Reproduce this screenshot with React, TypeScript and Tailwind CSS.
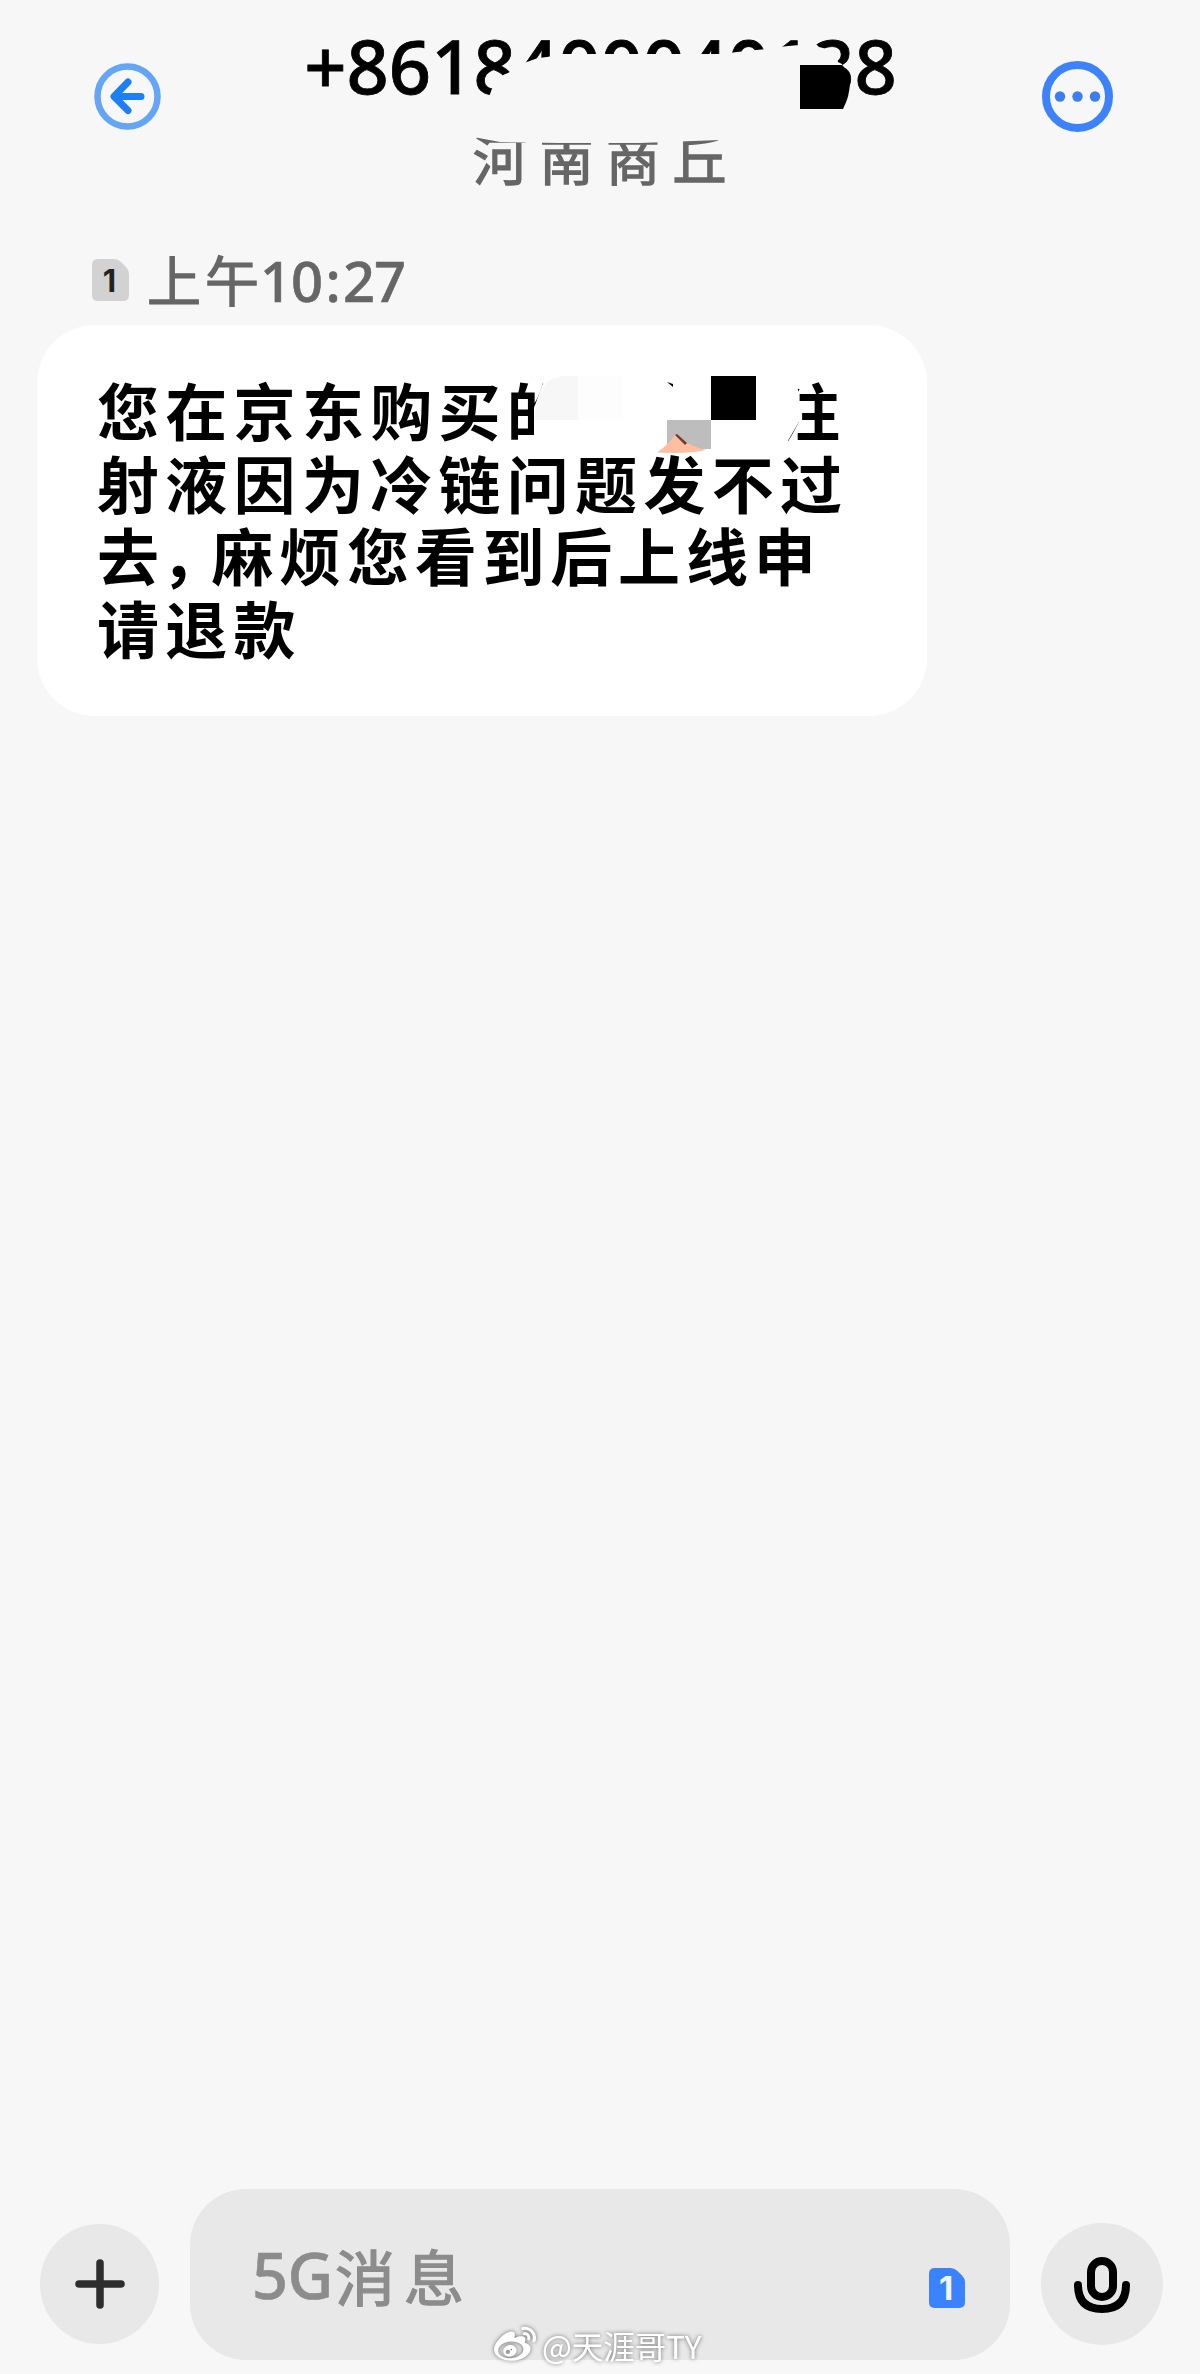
import { FaWeibo } from "react-icons/fa";

type SimBadgeProps = {
	className: string;
	textClassName: string;
}

function SimBadge(props: SimBadgeProps){
	const { className, textClassName } = props;

	return(
		<div className={`grid shrink-0 place-items-center ${className}`}>
			<svg viewBox="0 0 37 42" preserveAspectRatio="none" className="col-start-1 row-start-1 h-full w-full" fill="currentColor">
				<path d="M6 0H22Q26 0 29 3L34 8Q37 11 37 15V36Q37 42 31 42H6Q0 42 0 36V6Q0 0 6 0Z" />
			</svg>
			<span className={`col-start-1 row-start-1 mr-[2px] font-['Inter','Noto_Sans',sans-serif] font-bold leading-none ${textClassName}`}>1</span>
		</div>
	);
}

function Header(){
	return(
		<header className="relative flex h-[240px] shrink-0 items-start justify-between pl-[94px] pr-[86px]">
			<button className="mt-[62px] h-[68px] w-[68px]" aria-label="返回">
				<svg viewBox="0 0 68 68" fill="none" strokeLinecap="round" strokeLinejoin="round">
					<circle cx="33.5" cy="34.5" r="30" stroke="#64a5f6" strokeWidth="6.5" />
					<path d="M34 20L20 34.5L34 48.5M21 34.5H47" stroke="#1c7ff3" strokeWidth="7" />
				</svg>
			</button>
			<div className="mr-[3px] flex flex-col items-center">
				<h1 className="mt-[15px] h-[101px] whitespace-nowrap font-['Noto_Sans','Noto_Sans_CJK_SC',sans-serif] text-[74px] font-medium leading-[101px] text-black [-webkit-text-stroke:0.8px_#000]">+8618400040138</h1>
				<p className="mt-[9px] h-[66px] whitespace-nowrap pl-[11px] font-['Noto_Sans_CJK_SC',sans-serif] text-[54px] leading-[66px] tracking-[12.5px] text-[#666] [-webkit-text-stroke:1.4px_#666]">河南商丘</p>
			</div>
			<button className="mt-[60px] h-[72px] w-[72px]" aria-label="更多">
				<svg viewBox="0 0 72 72">
					<circle cx="35.5" cy="36.5" r="31.5" fill="none" stroke="#3c82fa" strokeWidth="8" />
					<circle cx="18" cy="36.5" r="5.2" fill="#3c7df0" />
					<circle cx="35.5" cy="36.5" r="5.2" fill="#3c7df0" />
					<circle cx="53" cy="36.5" r="5.2" fill="#3c7df0" />
				</svg>
			</button>
			{/* hides the middle of the phone number */}
			<svg viewBox="0 0 1200 240" className="pointer-events-none absolute inset-0 h-full w-full">
				<path d="M508 73Q494 77 489 98V115H842V64L838 62Q836 50 819 47L812 40H802L800 45L788 46L766 49L737 52L722 54H562L547 57L538 58L524 63Z" fill="#f7f7f7" />
				<path d="M800 65H842Q850 72 850 81Q850 96 843 109H800Z" fill="#000" />
				<path d="M468 130H720V140L640 143L560 143L500 142L468 136Z" fill="#f7f7f7" />
			</svg>
		</header>
	);
}

function Message(){
	return(
		<section className="relative ml-[37px] mt-[5px] h-[391px] w-[890px] shrink-0 rounded-[58px] bg-white pl-[60px] pt-[48px] font-['Noto_Sans_CJK_SC',sans-serif] text-[62px] font-bold leading-[72.5px] tracking-[6.3px] text-black">
			<p className="whitespace-nowrap">您在京东购买的<span className="inline-block w-[203px]"></span>注</p>
			<p className="whitespace-nowrap">射液因为冷链问题发不过</p>
			<p className="flex whitespace-nowrap">
				<span>去</span>
				<span className="-ml-[4px] w-[50px]">，</span>
				<span className="tracking-[5.8px]">麻烦您看到后上线申</span>
			</p>
			<p className="whitespace-nowrap">请退款</p>
			{/* blocks over the product name */}
			<svg viewBox="37 325 890 391" className="pointer-events-none absolute inset-0 h-full w-full">
				<path d="M546 375L534 408V451H782L800 420L797 375Z" fill="#fff" />
				<path d="M534 420Q538 376 564 376H578V420Z" fill="#f7f7f7" />
				<rect x="578" y="376" width="44" height="44" fill="#fdfdfd" />
				<rect x="711" y="376" width="45" height="44" fill="#000" />
				<rect x="667" y="420" width="44" height="29" fill="#bdbdbd" />
				<path d="M667 382L673 384V387Z" fill="#000" />
				<path d="M657 452.500Q668 445 675 435L689 444Q698 448 706 450Q690 454 657 452.500Z" fill="#ffbda2" />
				<path d="M675 435L677 434L687 443L685 445Z" fill="#703c2c" />
			</svg>
		</section>
	);
}

function Composer(){
	return(
		<footer className="relative mt-auto flex h-[185px] shrink-0 items-start">
			<button className="ml-[40px] mt-[35px] flex h-[120px] w-[119px] items-center justify-center rounded-full bg-[#e8e8e8]" aria-label="添加">
				<svg viewBox="0 0 50 50" className="h-[50px] w-[50px]" stroke="#2d2d2d" strokeWidth="7.500" strokeLinecap="round">
					<path d="M25 4V46M4 25H46" />
				</svg>
			</button>
			<div className="ml-[31px] flex h-[171px] w-[820px] items-start rounded-[56px] bg-[#e8e8e8] pl-[62px]">
				<div className="mt-[43px] flex h-[86px] items-center whitespace-nowrap leading-[86px] text-[#8c8c8c]">
					<span className="w-[83px] font-['Noto_Sans',sans-serif] text-[63px] font-medium tracking-[-0.5px] [-webkit-text-stroke:0.6px_#8c8c8c]">5G</span>
					<span className="font-['Noto_Sans_CJK_SC',sans-serif] text-[60px] tracking-[9px] [-webkit-text-stroke:1.4px_#8c8c8c]">消息</span>
				</div>
				<SimBadge className="ml-auto mr-[45px] mt-[79px] h-[40px] w-[36px] text-[#3b82ff]" textClassName="text-[33px] text-[#f0f7ff]" />
			</div>
			<button className="ml-[31px] mt-[34px] flex h-[122px] w-[122px] items-center justify-center rounded-full bg-[#e8e8e8]" aria-label="语音">
				<svg viewBox="0 0 58 58" className="mt-[1px] h-[58px] w-[58px]" fill="none" stroke="#000" strokeWidth="8" strokeLinecap="round">
					<rect x="18" y="5" width="22" height="36" rx="11" />
					<path d="M5 29Q5 53 29 53Q53 53 53 29" />
				</svg>
			</button>
			<div className="absolute left-[494px] top-[136px] flex h-[40px] items-center gap-[6px] text-white drop-shadow-[0_0_2px_rgba(0,0,0,0.55)]">
				<FaWeibo className="h-[42px] w-[42px]" />
				<span className="whitespace-nowrap font-['Noto_Sans_CJK_SC',sans-serif] text-[31.5px] leading-[40px]">@天涯哥TY</span>
			</div>
		</footer>
	);
}

export default function App(){
	return(
		<main className="flex h-[2374px] w-[1200px] flex-col overflow-hidden bg-[#f7f7f7]">
			<Header />
			<div className="flex h-[80px] shrink-0 items-center pl-[92px] text-[#666]">
				<SimBadge className="h-[42px] w-[37px] text-[#d2d2d2]" textClassName="text-[31px] text-[#222]" />
				<div className="ml-[18px] flex items-center whitespace-nowrap leading-[80px]">
					<span className="-mt-[3px] w-[113px] font-['Noto_Sans_CJK_SC',sans-serif] text-[54px] tracking-[4px] [-webkit-text-stroke:1.2px_#666]">上午</span>
					<span className="flex font-['Noto_Sans',sans-serif] text-[56px] font-medium tracking-[-1px] [-webkit-text-stroke:0.6px_#666]">
						<span>10</span>
						<span className="w-[21px] text-center">:</span>
						<span>27</span>
					</span>
				</div>
			</div>
			<Message />
			<Composer />
		</main>
	);
}
